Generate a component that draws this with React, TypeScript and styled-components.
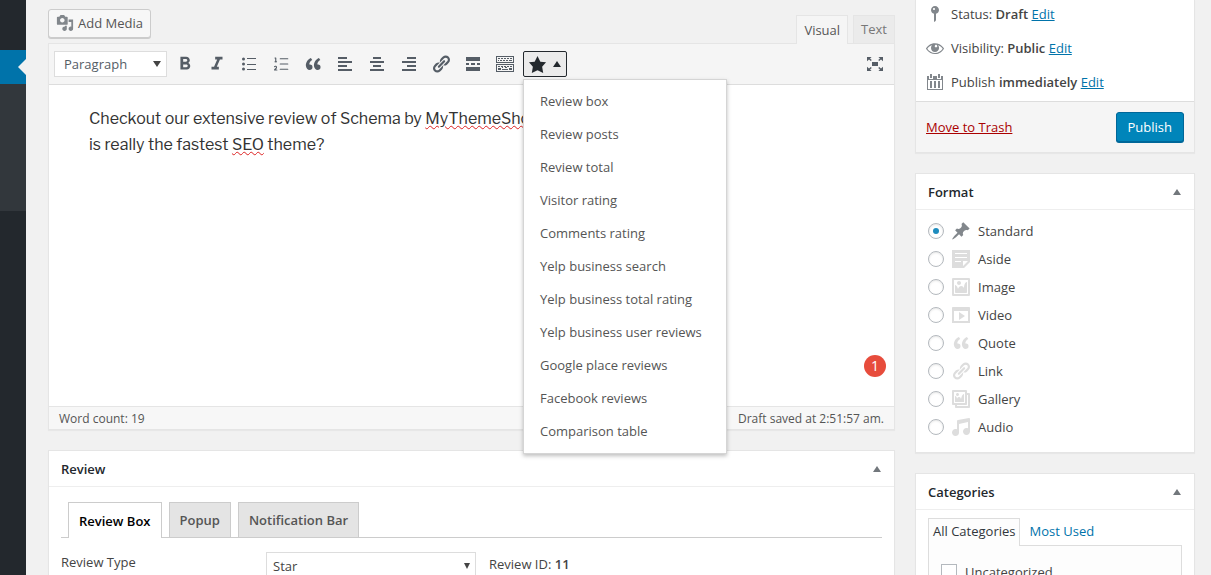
import React from 'react';
import styled, { createGlobalStyle } from 'styled-components';
import { MdFormatBold, MdFormatItalic } from 'react-icons/md';
import { ListOrdered } from 'lucide-react';

const GlobalStyle = createGlobalStyle`
  *, *::before, *::after { box-sizing: border-box; }
  body {
    margin: 0;
    background: #f1f1f1;
    color: #444;
    font: 13px/18px 'Open Sans', 'Segoe UI', sans-serif;
    overflow: hidden;
  }
  button, select, input { font: inherit; color: inherit; margin: 0; }
  button { cursor: pointer; }
`;

const paths = {
  media:
    'M13 11V4c0-.55-.45-1-1-1h-1.67L9 1H5L3.67 3H2c-.55 0-1 .45-1 1v7c0 .55.45 1 1 1h10c.55 0 1-.45 1-1zM7 4.5c1.38 0 2.5 1.12 2.5 2.5S8.38 9.5 7 9.5 4.5 8.38 4.5 7 5.62 4.5 7 4.5zM14 6h5v10.5c0 1.38-1.12 2.5-2.5 2.5S14 17.88 14 16.5s1.12-2.5 2.5-2.5c.17 0 .34.02.5.05V9h-3V6zm-4 8.05V13h2v3.5c0 1.38-1.12 2.5-2.5 2.5S7 17.88 7 16.5 8.12 14 9.5 14c.17 0 .34.02.5.05z',
  quote:
    'M9.49 13.22c0-.74-.2-1.38-.61-1.9-.62-.78-1.83-.88-2.53-.72-.29-1.65 1.11-3.75 2.92-4.65L7.88 4c-2.73 1.3-5.42 4.28-4.96 8.05C3.21 14.43 4.59 16 6.54 16c.85 0 1.56-.25 2.12-.75s.83-1.18.83-2.03zm8.05 0c0-.74-.2-1.38-.61-1.9-.63-.78-1.83-.88-2.53-.72-.29-1.65 1.11-3.75 2.92-4.65L15.93 4c-2.73 1.3-5.41 4.28-4.95 8.05.29 2.38 1.66 3.95 3.61 3.95.85 0 1.56-.25 2.12-.75s.83-1.18.83-2.03z',
  alignLeft: 'M12 5V3H3v2h9zm5 4V7H3v2h14zm-5 4v-2H3v2h9zm5 4v-2H3v2h14z',
  alignCenter: 'M14 5V3H6v2h8zm3 4V7H3v2h14zm-3 4v-2H6v2h8zm3 4v-2H3v2h14z',
  alignRight: 'M17 5V3H8v2h9zm0 4V7H3v2h14zm0 4v-2H8v2h9zm0 4v-2H3v2h14z',
  link:
    'M17.74 2.76c1.68 1.69 1.68 4.41 0 6.1l-1.53 1.52c-1.12 1.12-2.7 1.47-4.14 1.09l2.62-2.61.76-.77.76-.76c.84-.84.84-2.2 0-3.04-.84-.85-2.2-.85-3.04 0l-.77.76-3.38 3.38c-.37-1.44-.02-3.02 1.1-4.14l1.52-1.53c1.69-1.68 4.42-1.68 6.1 0zM8.59 13.43l5.34-5.34c.42-.42.42-1.1 0-1.52-.44-.43-1.13-.39-1.53 0l-5.33 5.34c-.42.42-.42 1.1 0 1.52.44.43 1.13.39 1.52 0zm-.76 2.29l4.14-4.15c.38 1.44.03 3.02-1.09 4.14l-1.52 1.53c-1.69 1.68-4.41 1.68-6.1 0-1.68-1.68-1.68-4.42 0-6.1l1.53-1.52c1.12-1.12 2.7-1.47 4.14-1.1l-4.14 4.15c-.85.84-.85 2.2 0 3.05.84.84 2.2.84 3.04 0z',
  more: 'M17 7V3H3v4h14zM6 11V9H3v2h3zm6 0V9H8v2h4zm5 0V9h-3v2h3zm0 6v-4H3v4h14z',
  bullets:
    'M4.5 3.5a1.5 1.5 0 1 1 0 3 1.5 1.5 0 0 1 0-3zM8 4h9v1H8zM4.5 8.5a1.5 1.5 0 1 1 0 3 1.5 1.5 0 0 1 0-3zM8 10h9v1H8zM4.5 13.5a1.5 1.5 0 1 1 0 3 1.5 1.5 0 0 1 0-3zM8 15h9v1H8z',
  keyboard:
    'M1 2h18v7H1zM2 3v5h16V3zM3 4h2v1H3zm3 0h2v1H6zm3 0h2v1H9zm3 0h2v1h-2zm3 0h2v1h-2zM3 6h1v1H3zm2 0h2v1H5zm3 0h2v1H8zm3 0h2v1h-2zm3 0h3v1h-3zM1 10h18v8H1zM2 11v6h16v-6zM3 12h2v1H3zm3 0h2v1H6zm3 0h2v1H9zm3 0h2v1h-2zm3 0h2v1h-2zM3 14h3v2H3zm4 1h6v1H7zm0-2h1v1H7zm3 0h2v1h-2zm4 1h3v2h-3z',
  star: 'M10 1l3 6 6 .75-4.12 4.62L16 19l-6-3-6 3 1.13-6.63L1 7.75 7 7z',
  expand:
    'M7 8h6v4H7zM2 3h4.6L5 4.5 6.8 6.1 5.8 7.1 4 5.5 2 7.3zM18 3h-4.6L15 4.5 13.2 6.1l1 1L16 5.5l2 1.8zM2 17h4.6L5 15.5l1.8-1.6-1-1L4 14.5l-2-1.8zM18 17h-4.6l1.6-1.5-1.8-1.6 1-1 1.8 1.6 2-1.8z',
  status:
    'M14 6c0 1.86-1.28 3.41-3 3.86V16c0 1-2 2-2 2V9.86c-1.72-.45-3-2-3-3.86 0-2.21 1.79-4 4-4s4 1.79 4 4zM8 5c0 .55.45 1 1 1s1-.45 1-1-.45-1-1-1-1 .45-1 1z',
  eye:
    'M18.3 9.5C15 4.9 8.5 3.8 3.9 7.2c-1.2.9-2.2 2.1-3 3.4.2.4.5.8.8 1.2 3.3 4.6 9.6 5.6 14.2 2.4.9-.7 1.7-1.4 2.4-2.4.3-.4.5-.8.8-1.2-.3-.4-.5-.8-.8-1.1zm-8.2-2.3c.5-.5 1.3-.5 1.8 0s.5 1.3 0 1.8-1.3.5-1.8 0-.5-1.3 0-1.8zm-.1 7.7c-3.1 0-6-1.6-7.7-4.2C3.5 9 5.1 7.8 7 7.2c-.7.8-1 1.7-1 2.7 0 2.2 1.7 4.1 4 4.1 2.2 0 4.1-1.7 4.1-4v-.1c0-1-.4-2-1.1-2.7 1.9.6 3.5 1.8 4.7 3.5-1.7 2.6-4.6 4.2-7.7 4.2z',
  calendar:
    'M2 4h16v14H2zM3 8v9h14V8zM5 9h2v7H5zM9 9h2v7H9zM13 9h2v7h-2zM5 2h2v2H5zM13 2h2v2h-2zM4 4h1v2h2V4h1v3H4zM12 4h1v2h2V4h1v3h-4z',
  pin:
    'M10.44 3.02l1.82-1.82 6.36 6.35-1.83 1.82c-1.05-.68-2.48-.57-3.41.36l-.75.75c-.92.93-1.04 2.35-.35 3.41l-1.83 1.82-2.41-2.41-2.8 2.79c-.42.42-3.38 2.71-3.8 2.29s1.86-3.39 2.28-3.81l2.79-2.79L4.1 9.36l1.83-1.82c1.05.69 2.48.57 3.4-.36l.75-.75c.93-.92 1.05-2.35.36-3.41z',
  aside: 'M1 1h18v12l-6 6H1V1zm3 3v1h12V4H4zm0 4v1h12V8H4zm6 5v-1H4v1h6zm2 4l5-5h-5v5z',
  image:
    'M2.25 1h15.5c.69 0 1.25.56 1.25 1.25v15.5c0 .69-.56 1.25-1.25 1.25H2.25C1.56 19 1 18.44 1 17.75V2.25C1 1.56 1.56 1 2.25 1zM17 17V3H3v14h14zM10 6c0-1.1-.9-2-2-2s-2 .9-2 2 .9 2 2 2 2-.9 2-2zm3 5s0-6 3-6v10c0 .55-.45 1-1 1H5c-.55 0-1-.45-1-1V8c2 0 3 4 3 4s1-3 3-3 3 2 3 2z',
  video: 'M2 2h16c.55 0 1 .45 1 1v15H1V3c0-.55.45-1 1-1zm15 14V6H3v10h14zM8 7l6 4-6 4V7z',
  gallery:
    'M16 4h1.96c.57 0 1.04.47 1.04 1.04v12.92c0 .57-.47 1.04-1.04 1.04H5.04C4.47 19 4 18.53 4 17.96V16H2.04C1.47 16 1 15.53 1 14.96V2.04C1 1.47 1.47 1 2.04 1h12.92c.57 0 1.04.47 1.04 1.04V4zM3 14h11V3H3v11zm5-8.5C8 4.67 7.33 4 6.5 4S5 4.67 5 5.5 5.67 7 6.5 7 8 6.33 8 5.5zm2 4.5s1-5 3-5v8H4V7c2 0 2 3 2 3s.33-2 2-2 2 2 2 2zm7 7V6h-1v8.96c0 .57-.47 1.04-1.04 1.04H6v1h11z',
  audio:
    'M6.99 3.08l11.02-2c.55-.08.99.45.99 1V14.5c0 1.94-1.57 3.5-3.5 3.5S12 16.44 12 14.5c0-1.93 1.57-3.5 3.5-3.5.54 0 1.04.14 1.5.35V5.08l-9 2V16c-.24 1.7-1.74 3-3.5 3C2.57 19 1 17.44 1 15.5 1 13.57 2.57 12 4.5 12c.54 0 1.04.14 1.5.35V4.08c0-.55.44-.91.99-1z',
};

type IconName = keyof typeof paths;

const Svg = styled.svg`
  display: block;
  flex: none;
  fill: currentColor;
`;

const Icon = ({ name, size = 20 }: { name: IconName; size?: number }) => (
  <Svg width={size} height={size} viewBox="0 0 20 20" aria-hidden="true">
    <path fillRule="evenodd" d={paths[name]} />
  </Svg>
);

const Triangle = styled.span<{ $up?: boolean; $size?: number; $height?: number }>`
  flex: none;
  width: 0;
  height: 0;
  border: solid transparent;
  border-width: 0 ${(p) => p.$size ?? 4}px;
  ${(p) => (p.$up ? 'border-bottom' : 'border-top')}: ${(p) => p.$height ?? 6}px solid currentColor;
`;

const Page = styled.div`
  display: flex;
  height: 100vh;
  overflow: hidden;
`;

const AdminMenu = styled.nav`
  flex: none;
  width: 26px;
  padding-top: 50px;
  background: #23282d;
`;

const CurrentItem = styled.a`
  display: flex;
  align-items: center;
  justify-content: flex-end;
  height: 34px;
  background: #0073aa;
  color: #f1f1f1;
`;

const Notch = styled.span`
  border: 8px solid transparent;
  border-left-width: 0;
  border-right-color: #f1f1f1;
`;

const SubMenu = styled.div`
  height: 127px;
  background: #32373c;
`;

const Content = styled.main`
  flex: 1;
  min-width: 0;
  display: flex;
  align-items: flex-start;
  gap: 20px;
  padding: 0 16px 0 22px;
`;

const MainColumn = styled.div`
  flex: 1;
  min-width: 0;
  padding-top: 9px;
`;

const SideColumn = styled.aside`
  flex: none;
  width: 280px;
  display: flex;
  flex-direction: column;
  gap: 20px;
`;

const EditorTop = styled.div`
  display: flex;
  justify-content: space-between;
  height: 35px;
`;

const MediaButton = styled.button`
  display: flex;
  align-items: center;
  gap: 4px;
  height: 29px;
  padding: 0 7px 1px;
  border: 1px solid #ccc;
  border-radius: 3px;
  background: #f7f7f7;
  box-shadow: 0 1px 0 #ccc;
  color: #555;

  svg { color: #82878c; }
`;

const ModeTabs = styled.div`
  display: flex;
  align-items: flex-start;
  gap: 5px;
  padding-top: 6px;
`;

const ModeTab = styled.button<{ $active?: boolean }>`
  position: relative;
  z-index: 1;
  height: ${(p) => (p.$active ? 29 : 28)}px;
  padding: 0 7px 1px;
  border: 1px solid #e5e5e5;
  border-bottom: 0;
  background: ${(p) => (p.$active ? '#f5f5f5' : '#ebebeb')};
  color: ${(p) => (p.$active ? '#555' : '#777')};
`;

const Editor = styled.section`
  margin-top: -1px;
  border: 1px solid #e5e5e5;
  box-shadow: 0 1px 1px rgba(0, 0, 0, 0.04);
  background: #fff;
`;

const Toolbar = styled.div`
  display: flex;
  align-items: center;
  height: 41px;
  padding: 0 9px 0 5px;
  border-bottom: 1px solid #ddd;
  background: #f5f5f5;
  color: #555d66;
`;

const SelectBox = styled.span<{ $width: number; $height: number }>`
  flex: none;
  display: grid;
  align-items: center;
  width: ${(p) => p.$width}px;
  height: ${(p) => p.$height}px;

  > * { grid-area: 1 / 1; }
  > span { justify-self: end; margin-right: 6px; pointer-events: none; color: #444; }
`;

const Select = styled.select<{ $pad: number }>`
  appearance: none;
  width: 100%;
  height: 100%;
  padding: 0 20px 0 ${(p) => p.$pad}px;
  border: 1px solid #ddd;
  border-radius: 0;
  background: #fff;
`;

const Tools = styled.div`
  display: flex;
  align-items: center;
  gap: 2px;
  margin: 0 auto 0 3px;
`;

const Tool = styled.button`
  display: flex;
  align-items: center;
  justify-content: center;
  width: 30px;
  height: 26px;
  padding: 0;
  border: 0;
  background: none;
`;

const MenuAnchor = styled.div`
  position: relative;
  margin-left: 1px;
`;

const StarButton = styled.button`
  display: flex;
  align-items: center;
  gap: 6px;
  width: 44px;
  height: 26px;
  padding: 0 4px;
  border: 1px solid #23282d;
  border-radius: 2px;
  background: #ebebeb;
  color: #23282d;
`;

const Menu = styled.ul`
  position: absolute;
  z-index: 5;
  top: 28px;
  left: 0;
  width: 204px;
  margin: 0;
  padding: 4px 0 6px;
  list-style: none;
  border: 1px solid #d5d5d5;
  background: #fff;
  box-shadow: 0 2px 4px rgba(0, 0, 0, 0.25);
`;

const MenuItem = styled.button`
  display: block;
  width: 100%;
  height: 33px;
  padding: 0 16px;
  border: 0;
  background: none;
  color: #555;
  text-align: left;
  white-space: nowrap;
`;

const EditorBody = styled.div`
  position: relative;
  min-height: 321px;
  padding: 21px 40px;
  color: #333;
  font: 16px/26px 'Libre Franklin', Roboto, sans-serif;

  p { margin: 0; }
`;

const Misspelled = styled.span`
  text-decoration: underline wavy #d22 1px;
  text-underline-offset: 1px;
`;

const Badge = styled.span`
  position: absolute;
  right: 8px;
  bottom: 29px;
  width: 22px;
  height: 22px;
  border-radius: 50%;
  background: #e74c3c;
  color: #fff;
  font: 14px/22px 'Open Sans', sans-serif;
  text-align: center;
`;

const StatusBar = styled.div`
  display: flex;
  align-items: center;
  justify-content: space-between;
  height: 23px;
  padding: 2px 10px 0;
  border-top: 1px solid #e5e5e5;
  background: #f7f7f7;
  color: #555;
  font-size: 12px;
`;

const Panel = styled.section`
  border: 1px solid #e5e5e5;
  background: #fff;
  box-shadow: 0 1px 1px rgba(0, 0, 0, 0.04);
`;

const PanelHead = styled.header`
  display: flex;
  align-items: center;
  justify-content: space-between;
  height: 36px;
  padding: 0 12px;
  border-bottom: 1px solid #eee;
  color: #23282d;

  h2 { margin: 0; font-size: 13px; font-weight: 600; }
`;

const Toggle = styled.button`
  display: flex;
  padding: 0 1px;
  border: 0;
  background: none;
  color: #72777c;
`;

const ReviewPanel = styled(Panel)`
  margin-top: 20px;
`;

const ReviewTabs = styled.div`
  display: flex;
  gap: 7px;
  margin: 15px 12px 0;
  padding: 0 7px;
  border-bottom: 1px solid #ccc;
`;

const ReviewTab = styled.button<{ $active?: boolean }>`
  height: ${(p) => (p.$active ? 36 : 35)}px;
  margin-bottom: ${(p) => (p.$active ? -1 : 0)}px;
  padding: 0 10px;
  border: 1px solid #ccc;
  border-bottom: 0;
  background: ${(p) => (p.$active ? '#fff' : '#e4e4e4')};
  color: ${(p) => (p.$active ? '#000' : '#555')};
  font-weight: 600;
`;

const FieldRow = styled.div`
  display: grid;
  grid-template-columns: 205px 210px 1fr;
  padding: 14px 12px;

  > label { padding-top: 1px; }
`;

const ReviewId = styled.span`
  padding: 3px 13px;

  b { font-weight: 600; }
`;

const PublishRow = styled.div`
  display: flex;
  align-items: center;
  gap: 6px;
  height: 34px;
  padding: 0 9px;

  svg { color: #82878c; }
  b { font-weight: 600; }
`;

const Link = styled.a<{ $danger?: boolean }>`
  color: ${(p) => (p.$danger ? '#a00' : '#0073aa')};
  text-decoration: underline;
`;

const PublishPanel = styled(Panel)`
  border-top: 0;
`;

const PublishRows = styled.div`
  display: flex;
  flex-direction: column;
  margin-top: -3px;
  padding-bottom: 2px;
`;

const PublishFoot = styled.div`
  display: flex;
  align-items: center;
  justify-content: space-between;
  height: 51px;
  padding: 0 10px;
  border-top: 1px solid #ddd;
  background: #f5f5f5;
`;

const PublishButton = styled.button`
  height: 30px;
  padding: 0 11px;
  border: 1px solid #006799;
  border-radius: 3px;
  background: #0085ba;
  box-shadow: 0 1px 0 #006799;
  color: #fff;
`;

const FormatList = styled.div`
  padding: 7px 12px 11px;
`;

const FormatRow = styled.label<{ $active?: boolean }>`
  display: flex;
  align-items: center;
  height: 28px;

  svg { margin: 0 7px; color: ${(p) => (p.$active ? '#82878c' : '#ddd')}; }
`;

const Radio = styled.input`
  appearance: none;
  flex: none;
  display: grid;
  place-items: center;
  width: 16px;
  height: 16px;
  border: 1px solid #b4b9be;
  border-radius: 50%;
  background: #fff;
  box-shadow: inset 0 1px 2px rgba(0, 0, 0, 0.1);

  &:checked::before {
    content: '';
    width: 6px;
    height: 6px;
    border-radius: 50%;
    background: #1e8cbe;
  }
`;

const CategoryTabs = styled.div`
  display: flex;
  padding: 8px 12px 0;
`;

const CategoryTab = styled.button<{ $active?: boolean }>`
  position: relative;
  z-index: 1;
  height: 28px;
  padding: 0 4px 3px;
  border: 1px solid ${(p) => (p.$active ? '#ddd' : 'transparent')};
  border-bottom: 0;
  background: ${(p) => (p.$active ? '#fdfdfd' : 'none')};
  color: ${(p) => (p.$active ? '#32373c' : '#0073aa')};
  margin-right: 4px;
`;

const CategoryList = styled.div`
  height: 200px;
  margin: -1px 12px 12px;
  padding: 17px 12px;
  border: 1px solid #ddd;
  background: #fdfdfd;

  label { display: flex; align-items: center; gap: 8px; }
`;

const Checkbox = styled.input`
  appearance: none;
  width: 16px;
  height: 16px;
  border: 1px solid #b4b9be;
  background: #fff;
`;

const tools: { label: string; icon: React.ReactNode }[] = [
  { label: 'Bold', icon: <MdFormatBold size={22} /> },
  { label: 'Italic', icon: <MdFormatItalic size={22} /> },
  { label: 'Bulleted list', icon: <Icon name="bullets" /> },
  { label: 'Numbered list', icon: <ListOrdered size={18} strokeWidth={1.5} /> },
  { label: 'Blockquote', icon: <Icon name="quote" /> },
  { label: 'Align left', icon: <Icon name="alignLeft" /> },
  { label: 'Align center', icon: <Icon name="alignCenter" /> },
  { label: 'Align right', icon: <Icon name="alignRight" /> },
  { label: 'Insert link', icon: <Icon name="link" /> },
  { label: 'Insert Read More tag', icon: <Icon name="more" /> },
  { label: 'Toolbar toggle', icon: <Icon name="keyboard" /> },
];

const menuItems = [
  'Review box',
  'Review posts',
  'Review total',
  'Visitor rating',
  'Comments rating',
  'Yelp business search',
  'Yelp business total rating',
  'Yelp business user reviews',
  'Google place reviews',
  'Facebook reviews',
  'Comparison table',
];

const publishRows: { icon: IconName; label: string; value: string }[] = [
  { icon: 'status', label: 'Status:', value: 'Draft' },
  { icon: 'eye', label: 'Visibility:', value: 'Public' },
  { icon: 'calendar', label: 'Publish', value: 'immediately' },
];

const formats: { icon: IconName; label: string }[] = [
  { icon: 'pin', label: 'Standard' },
  { icon: 'aside', label: 'Aside' },
  { icon: 'image', label: 'Image' },
  { icon: 'video', label: 'Video' },
  { icon: 'quote', label: 'Quote' },
  { icon: 'link', label: 'Link' },
  { icon: 'gallery', label: 'Gallery' },
  { icon: 'audio', label: 'Audio' },
];

const Heading = ({ title }: { title: string }) => (
  <PanelHead>
    <h2>{title}</h2>
    <Toggle aria-label={`Toggle panel: ${title}`}>
      <Triangle $up />
    </Toggle>
  </PanelHead>
);

export default function App() {
  const [format, setFormat] = React.useState('Standard');

  return (
    <>
      <GlobalStyle />
      <Page>
        <AdminMenu aria-label="Main menu">
          <CurrentItem href="#posts" aria-label="Posts">
            <Notch />
          </CurrentItem>
          <SubMenu />
        </AdminMenu>
        <Content>
          <MainColumn>
            <EditorTop>
              <MediaButton>
                <Icon name="media" size={18} />
                Add Media
              </MediaButton>
              <ModeTabs>
                <ModeTab $active>Visual</ModeTab>
                <ModeTab>Text</ModeTab>
              </ModeTabs>
            </EditorTop>
            <Editor>
              <Toolbar>
                <SelectBox $width={113} $height={26}>
                  <Select $pad={9} aria-label="Block format">
                    <option>Paragraph</option>
                  </Select>
                  <Triangle />
                </SelectBox>
                <Tools>
                  {tools.map((tool) => (
                    <Tool key={tool.label} aria-label={tool.label}>
                      {tool.icon}
                    </Tool>
                  ))}
                  <MenuAnchor>
                    <StarButton aria-label="Review shortcodes" aria-expanded="true">
                      <Icon name="star" size={19} />
                      <Triangle $up $height={6} />
                    </StarButton>
                    <Menu>
                      {menuItems.map((item) => (
                        <li key={item}>
                          <MenuItem>{item}</MenuItem>
                        </li>
                      ))}
                    </Menu>
                  </MenuAnchor>
                </Tools>
                <Icon name="expand" />
              </Toolbar>
              <EditorBody>
                <p>
                  Checkout our extensive review of Schema by <Misspelled>MyThemeShop</Misspelled>
                  <br />
                  is really the fastest <Misspelled>SEO</Misspelled> theme?
                </p>
                <Badge>1</Badge>
              </EditorBody>
              <StatusBar>
                <span>Word count: 19</span>
                <span>Draft saved at 2:51:57 am.</span>
              </StatusBar>
            </Editor>
            <ReviewPanel>
              <Heading title="Review" />
              <ReviewTabs>
                <ReviewTab $active>Review Box</ReviewTab>
                <ReviewTab>Popup</ReviewTab>
                <ReviewTab>Notification Bar</ReviewTab>
              </ReviewTabs>
              <FieldRow>
                <label htmlFor="review-type">Review Type</label>
                <SelectBox $width={210} $height={28}>
                  <Select $pad={6} id="review-type">
                    <option>Star</option>
                  </Select>
                  <Triangle $size={3} />
                </SelectBox>
                <ReviewId>
                  Review ID: <b>11</b>
                </ReviewId>
              </FieldRow>
            </ReviewPanel>
          </MainColumn>
          <SideColumn>
            <PublishPanel>
              <PublishRows>
                {publishRows.map((row) => (
                  <PublishRow key={row.icon}>
                    <Icon name={row.icon} />
                    <span>
                      {row.label} <b>{row.value}</b> <Link href="#edit">Edit</Link>
                    </span>
                  </PublishRow>
                ))}
              </PublishRows>
              <PublishFoot>
                <Link $danger href="#trash">Move to Trash</Link>
                <PublishButton>Publish</PublishButton>
              </PublishFoot>
            </PublishPanel>
            <Panel>
              <Heading title="Format" />
              <FormatList>
                {formats.map((item) => (
                  <FormatRow key={item.label} $active={item.label === format}>
                    <Radio
                      type="radio"
                      name="format"
                      checked={item.label === format}
                      onChange={() => setFormat(item.label)}
                    />
                    <Icon name={item.icon} />
                    {item.label}
                  </FormatRow>
                ))}
              </FormatList>
            </Panel>
            <Panel>
              <Heading title="Categories" />
              <CategoryTabs>
                <CategoryTab $active>All Categories</CategoryTab>
                <CategoryTab>Most Used</CategoryTab>
              </CategoryTabs>
              <CategoryList>
                <label>
                  <Checkbox type="checkbox" />
                  Uncategorized
                </label>
              </CategoryList>
            </Panel>
          </SideColumn>
        </Content>
      </Page>
    </>
  );
}
